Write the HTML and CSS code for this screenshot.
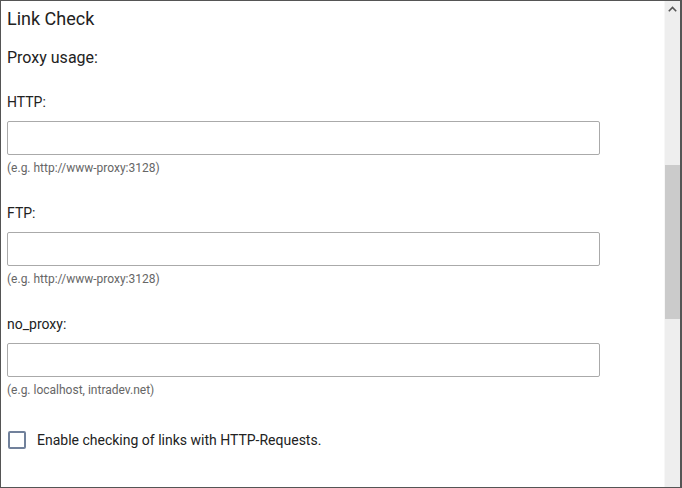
FILE: index.html
```html
<!DOCTYPE html>
<html>
<head>
<meta charset="utf-8">
<link rel="stylesheet" href="styles.css">
</head>
<body>
<div class="frame">
  <div class="content">
    <h1 class="title">Link Check</h1>
    <h2 class="section">Proxy usage:</h2>
    <div class="field">
      <label class="label">HTTP:</label>
      <input class="input" type="text">
      <div class="hint">(e.g. http://www-proxy:3128)</div>
    </div>
    <div class="field">
      <label class="label">FTP:</label>
      <input class="input" type="text">
      <div class="hint">(e.g. http://www-proxy:3128)</div>
    </div>
    <div class="field">
      <label class="label">no_proxy:</label>
      <input class="input" type="text">
      <div class="hint">(e.g. localhost, intradev.net)</div>
    </div>
    <label class="check">
      <span class="box"></span>
      <span class="check-text">Enable checking of links with HTTP-Requests.</span>
    </label>
  </div>
  <div class="scrollbar">
    <div class="arrow">
      <svg width="9" height="6" viewBox="0 0 9 6"><path d="M0.8 5.2 L4.5 1.5 L8.2 5.2" fill="none" stroke="#555" stroke-width="1.6"/></svg>
    </div>
    <div class="thumb"></div>
  </div>
</div>
</body>
</html>
```
FILE: styles.css
```css
html, body {
  margin: 0;
  padding: 0;
  background: #fff;
}
body {
  font-family: Roboto, "Liberation Sans", sans-serif;
  color: #222;
}
.frame {
  width: 682px;
  height: 488px;
  box-sizing: border-box;
  border: 1px solid #555;
  border-right-width: 2px;
  display: flex;
  overflow: hidden;
}
.content {
  flex: 1;
  padding: 7px 0 0 6px;
  border-right: 1px solid #f7f7f7;
}
.title {
  margin: 0;
  font-size: 18px;
  line-height: 22px;
  font-weight: 400;
}
.section {
  margin: 18px 0 0;
  font-size: 16px;
  line-height: 19px;
  font-weight: 400;
}
.field {
  display: flex;
  flex-direction: column;
  align-items: flex-start;
  margin-top: 27px;
}
.field + .field {
  margin-top: 30px;
}
.label {
  font-size: 14px;
  line-height: 17px;
  color: #222;
}
.input {
  margin: 10px 0 0;
  width: 593px;
  height: 34px;
  box-sizing: border-box;
  border: 1px solid #aaa;
  border-radius: 2px;
  padding: 0 8px;
  font: inherit;
  background: #fff;
  outline: none;
}
.hint {
  margin-top: 6px;
  font-size: 12px;
  line-height: 14px;
  color: #666;
}
.check {
  display: flex;
  align-items: center;
  margin-top: 34px;
  padding-left: 1px;
}
.box {
  width: 18px;
  height: 18px;
  box-sizing: border-box;
  border: 2px solid #71819b;
  border-radius: 2px;
  flex: none;
}
.check-text {
  margin-left: 11px;
  font-size: 14px;
  line-height: 17px;
  color: #222;
}
.scrollbar {
  width: 15px;
  flex: none;
  background: #eeeeee;
  display: flex;
  flex-direction: column;
  align-items: stretch;
}
.arrow {
  height: 15px;
  display: flex;
  align-items: center;
  justify-content: center;
}
.thumb {
  margin-top: 149px;
  height: 154px;
  background: #cbcbcb;
}
```
